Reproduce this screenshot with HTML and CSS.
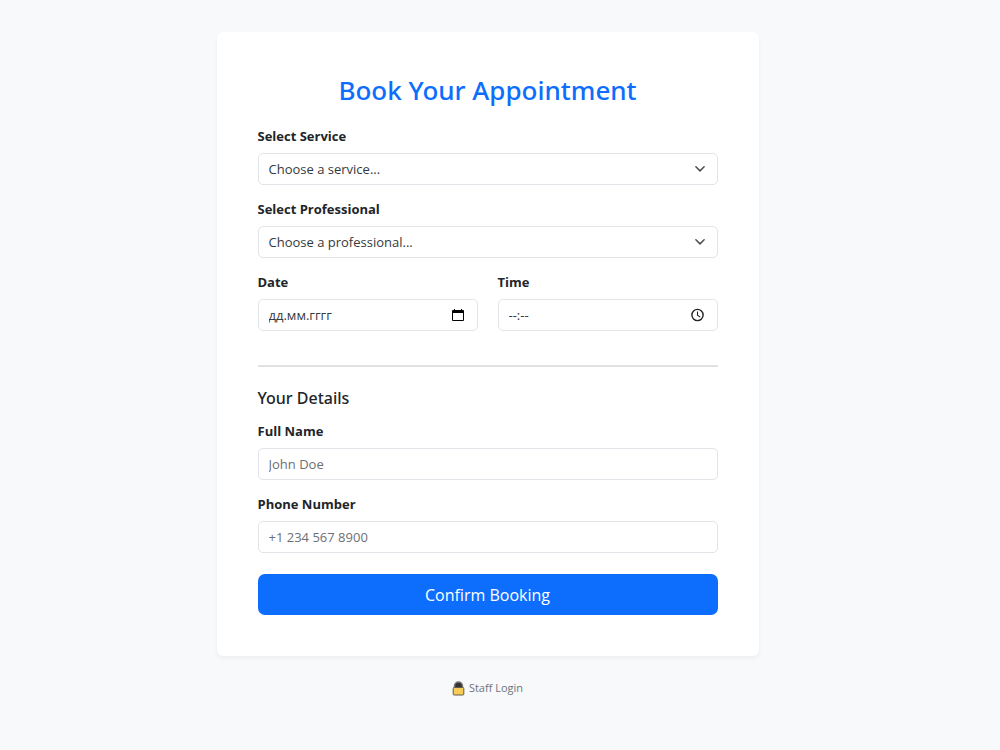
FILE: index.html
```html
<!DOCTYPE html>
<html lang="en">
<head>
<meta charset="utf-8">
<meta name="viewport" content="width=device-width, initial-scale=1">
<title>Book Your Appointment</title>
<link rel="stylesheet" href="styles.css">
</head>
<body class="page">
<main class="booking">
  <form class="card">
    <h1 class="title">Book Your Appointment</h1>
    <div class="field">
      <label class="label" for="service">Select Service</label>
      <div class="control">
        <select class="input select" id="service"><option>Choose a service...</option></select>
        <svg class="chevron" viewBox="0 0 16 16" aria-hidden="true"><path d="m2.500 5 5.500 5.500L13.500 5"/></svg>
      </div>
    </div>
    <div class="field">
      <label class="label" for="professional">Select Professional</label>
      <div class="control">
        <select class="input select" id="professional"><option>Choose a professional...</option></select>
        <svg class="chevron" viewBox="0 0 16 16" aria-hidden="true"><path d="m2.500 5 5.500 5.500L13.500 5"/></svg>
      </div>
    </div>
    <div class="row">
      <div class="field">
        <label class="label" for="date">Date</label>
        <div class="control">
          <input class="input picker" id="date" type="text" placeholder="дд.мм.гггг">
          <button class="picker-button" type="button" aria-label="Open calendar">
            <svg class="picker-icon" viewBox="0 0 14 14" aria-hidden="true"><path d="M2 2h1V1h1v1h6V1h1v1h1q1 0 1 1v9q0 1-1 1H2q-1 0-1-1V3q0-1 1-1zM2 5v7h10V5z" fill-rule="evenodd"/></svg>
          </button>
        </div>
      </div>
      <div class="field">
        <label class="label" for="time">Time</label>
        <div class="control">
          <input class="input picker" id="time" type="text" placeholder="--:--">
          <button class="picker-button" type="button" aria-label="Open time list">
            <svg class="picker-icon" viewBox="0 0 14 14" aria-hidden="true"><g fill="none" stroke="#222"><circle cx="6.500" cy="7" r="5.600" stroke-width="1.400"/><path d="M6.500 3.500V7.200l2.700 1.900" stroke-width="1.100"/></g></svg>
          </button>
        </div>
      </div>
    </div>
    <hr class="divider">
    <h2 class="subtitle">Your Details</h2>
    <div class="field">
      <label class="label" for="name">Full Name</label>
      <input class="input" id="name" type="text" placeholder="John Doe">
    </div>
    <div class="field">
      <label class="label" for="phone">Phone Number</label>
      <input class="input" id="phone" type="tel" placeholder="+1 234 567 8900">
    </div>
    <button class="submit" type="submit">Confirm Booking</button>
  </form>
  <a class="staff" href="#">
    <svg class="lock" viewBox="0 0 13 15" aria-hidden="true">
      <path d="M2.500 7V5a4 4 0 0 1 8 0v2" fill="#333" stroke="#77777a" stroke-width="1.500"/>
      <rect x="1.200" y="6.500" width="10.600" height="7.500" rx="1" fill="#f6cc57" stroke="#605a4a"/>
    </svg>
    Staff Login
  </a>
</main>
</body>
</html>
```
FILE: styles.css
```css
* { box-sizing: border-box; }

.page {
  margin: 0;
  padding: 32px 25px 32px 0;
  background: #f8f9fa;
  color: #212529;
  font-family: "Segoe UI", "Open Sans", "Noto Sans", sans-serif;
  font-size: 13px;
  line-height: 20px;
}

.booking {
  display: flex;
  flex-direction: column;
  align-items: center;
  gap: 22px;
}

.card {
  width: 100%;
  max-width: 542px;
  padding: 41px;
  background: #fff;
  border-radius: 6px;
  box-shadow: 0 2px 4px rgba(0, 0, 0, 0.05);
}

.title,
.subtitle {
  font-family: "Segoe UI", "Noto Sans", "Open Sans", sans-serif;
  font-weight: 500;
}

.title {
  margin: 0 0 19px;
  color: #0d6efd;
  font-size: 26px;
  line-height: 34px;
  text-align: center;
}

.field { margin-bottom: 14px; }

.label {
  display: block;
  margin-bottom: 7px;
  font-weight: 700;
}

.control { position: relative; }

.input {
  display: block;
  width: 100%;
  height: 32px;
  padding: 0 10px;
  border: 1px solid #e1e4e8;
  border-radius: 5px;
  background: #fff;
  color: #343a40;
  font: inherit;
}

.input::placeholder { color: #6c7075; opacity: 1; }
.picker::placeholder { color: #343a40; }
.select { appearance: none; }

.chevron {
  position: absolute;
  top: 10px;
  right: 12px;
  width: 12px;
  height: 12px;
  fill: none;
  stroke: #4a4f54;
  stroke-width: 2;
  stroke-linecap: round;
  stroke-linejoin: round;
  pointer-events: none;
}

.picker-button {
  position: absolute;
  top: 9px;
  right: 13px;
  width: 14px;
  height: 14px;
  padding: 0;
  border: 0;
  background: none;
}

.picker-icon {
  display: block;
  width: 100%;
  height: 100%;
}

.row {
  display: grid;
  grid-template-columns: 1fr 1fr;
  gap: 20px;
}

.divider {
  height: 2px;
  margin: 20px 0;
  border: 0;
  background: #e0e1e2;
}

.subtitle {
  margin: 0 0 12px;
  font-size: 16px;
  line-height: 22px;
}

.submit {
  display: block;
  width: 100%;
  height: 41px;
  margin-top: 21px;
  border: 0;
  border-radius: 7px;
  background: #0d6efd;
  color: #fff;
  font: inherit;
  font-size: 16px;
}

.staff {
  display: flex;
  align-items: center;
  gap: 4px;
  color: #6c757d;
  font-size: 11px;
  text-decoration: none;
}

.lock {
  width: 13px;
  height: 15px;
}
```
